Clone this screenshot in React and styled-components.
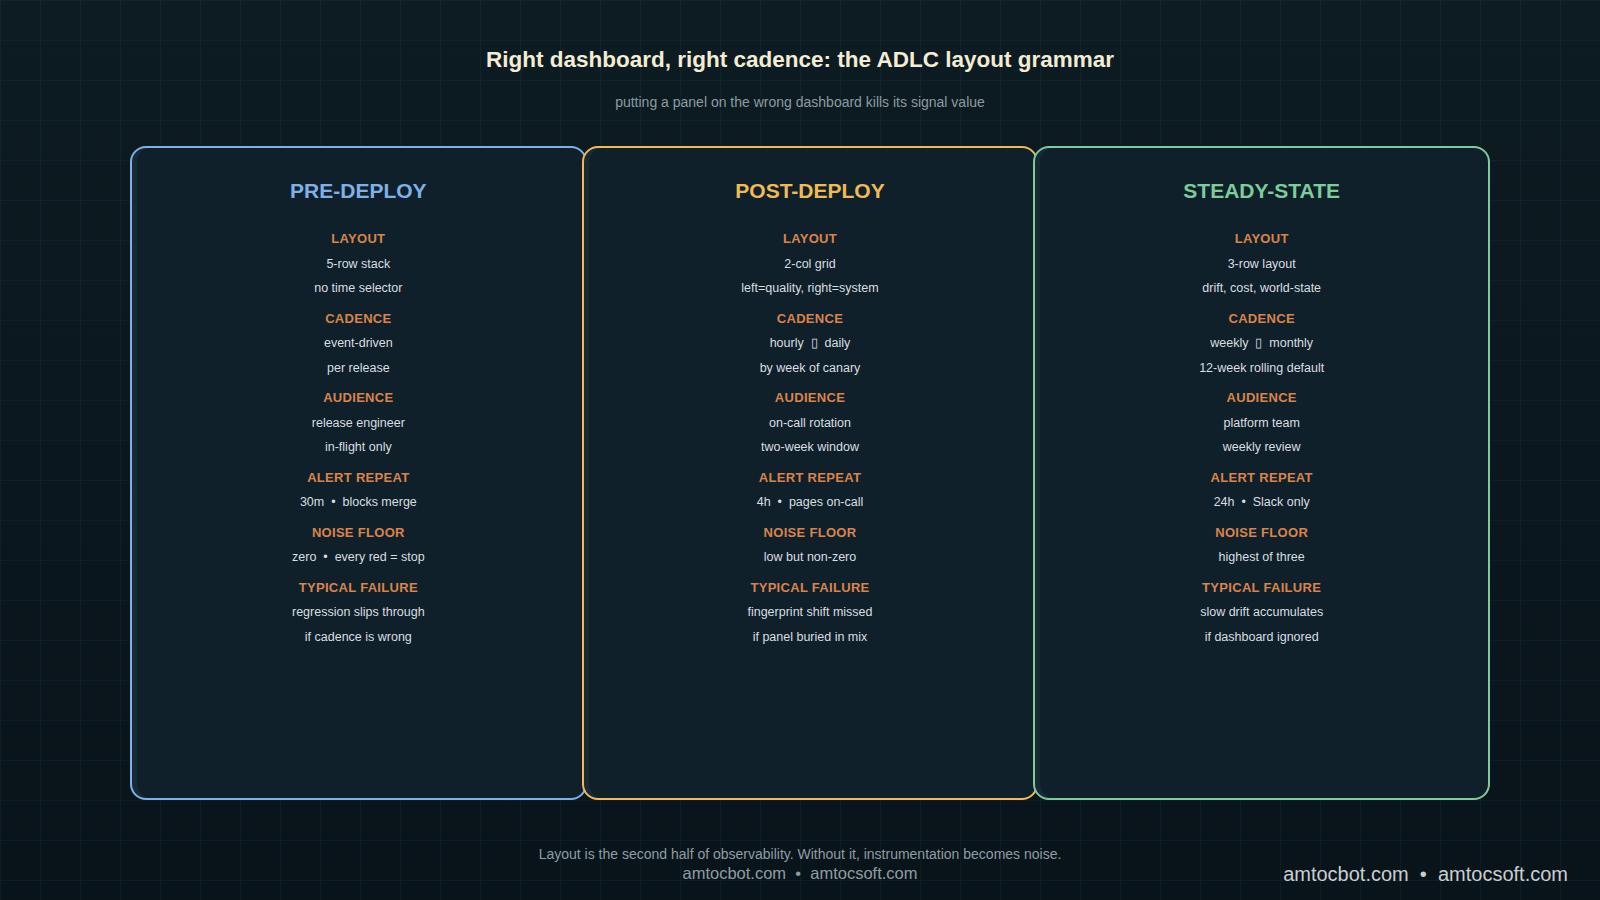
import React from "react";
import styled, { createGlobalStyle } from "styled-components";

const Global = createGlobalStyle`
  html, body { margin: 0; padding: 0; }
  body {
    width: 1600px; height: 900px; overflow: hidden;
    font-family: "Liberation Sans", Arial, sans-serif;
    background-color: #0b161c;
    background-image:
      linear-gradient(rgba(40,70,80,0.18) 1px, transparent 1px),
      linear-gradient(90deg, rgba(40,70,80,0.18) 1px, transparent 1px),
      linear-gradient(180deg, #0d1c22 0%, #09131a 100%);
    background-size: 40px 40px, 40px 40px, 100% 100%;
  }
`;

const Page = styled.div`
  position: relative;
  height: 900px;
  display: flex;
  flex-direction: column;
  align-items: center;
`;
const Title = styled.h1`
  margin: 47px 0 0;
  font-size: 22.5px;
  font-weight: 700;
  color: #f4ecd4;
`;
const Sub = styled.div`
  margin-top: 21px;
  font-size: 14px;
  color: #8b9ba3;
`;
const Row = styled.div`
  margin-top: 36px;
  margin-left: 20px;
  display: flex;
  width: 1360px;
  height: 654px;
`;
const Card = styled.div`
  flex: 1;
  margin-left: ${(p) => (p.$first ? 0 : "-5px")};
  border: 2.5px solid ${(p) => p.$c};
  border-radius: 16px;
  background: #10202a;
  box-shadow: inset 5px 0 0 #182a36;
  display: flex;
  flex-direction: column;
  align-items: center;
  padding-top: 31px;
  box-sizing: border-box;
`;
const CardTitle = styled.div`
  font-size: 21px;
  font-weight: 700;
  color: ${(p) => p.$c};
  margin-bottom: 24px;
`;
const Section = styled.div`
  display: flex;
  flex-direction: column;
  align-items: center;
  margin-bottom: 6px;
`;
const Label = styled.div`
  font-size: 13px;
  font-weight: 700;
  color: #d9844c;
  line-height: 24.5px;
  letter-spacing: 0.3px;
`;
const Line = styled.div`
  font-size: 12.5px;
  color: #d9dee0;
  line-height: 24.5px;
  white-space: pre;
`;
const Foot = styled.div`
  margin-top: 46px;
  font-size: 14px;
  color: #8f9da4;
`;
const Urls = styled.div`
  margin-top: 2px;
  font-size: 16.5px;
  color: #8f9da4;
  white-space: pre;
`;
const Corner = styled.div`
  position: absolute;
  right: 32px;
  bottom: 14px;
  font-size: 20px;
  color: #c9ced1;
  white-space: pre;
`;

const cards = [
  { t: "PRE-DEPLOY", c: "#7fb0e8", s: [
    ["LAYOUT", ["5-row stack", "no time selector"]],
    ["CADENCE", ["event-driven", "per release"]],
    ["AUDIENCE", ["release engineer", "in-flight only"]],
    ["ALERT REPEAT", ["30m  •  blocks merge"]],
    ["NOISE FLOOR", ["zero  •  every red = stop"]],
    ["TYPICAL FAILURE", ["regression slips through", "if cadence is wrong"]],
  ]},
  { t: "POST-DEPLOY", c: "#f0bb55", s: [
    ["LAYOUT", ["2-col grid", "left=quality, right=system"]],
    ["CADENCE", ["hourly  ▯  daily", "by week of canary"]],
    ["AUDIENCE", ["on-call rotation", "two-week window"]],
    ["ALERT REPEAT", ["4h  •  pages on-call"]],
    ["NOISE FLOOR", ["low but non-zero"]],
    ["TYPICAL FAILURE", ["fingerprint shift missed", "if panel buried in mix"]],
  ]},
  { t: "STEADY-STATE", c: "#7ecb9c", s: [
    ["LAYOUT", ["3-row layout", "drift, cost, world-state"]],
    ["CADENCE", ["weekly  ▯  monthly", "12-week rolling default"]],
    ["AUDIENCE", ["platform team", "weekly review"]],
    ["ALERT REPEAT", ["24h  •  Slack only"]],
    ["NOISE FLOOR", ["highest of three"]],
    ["TYPICAL FAILURE", ["slow drift accumulates", "if dashboard ignored"]],
  ]},
];

export default function App() {
  return (
    <>
      <Global />
      <Page>
        <Title>Right dashboard, right cadence: the ADLC layout grammar</Title>
        <Sub>putting a panel on the wrong dashboard kills its signal value</Sub>
        <Row>
          {cards.map((c, i) => (
            <Card key={c.t} $c={c.c} $first={i === 0}>
              <CardTitle $c={c.c}>{c.t}</CardTitle>
              {c.s.map(([l, lines]) => (
                <Section key={l}>
                  <Label>{l}</Label>
                  {lines.map((x) => <Line key={x}>{x}</Line>)}
                </Section>
              ))}
            </Card>
          ))}
        </Row>
        <Foot>Layout is the second half of observability. Without it, instrumentation becomes noise.</Foot>
        <Urls>amtocbot.com  •  amtocsoft.com</Urls>
        <Corner>amtocbot.com  •  amtocsoft.com</Corner>
      </Page>
    </>
  );
}
